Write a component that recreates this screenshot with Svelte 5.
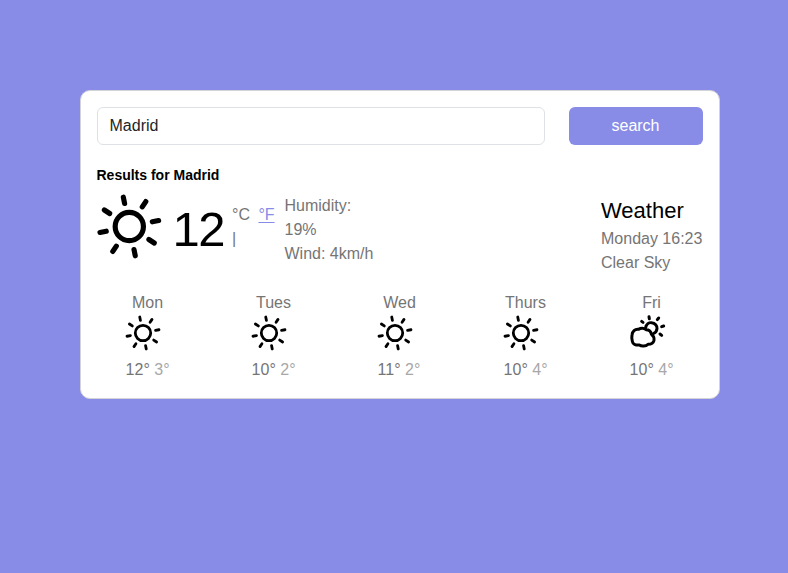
<script>
  const days = [
    { name: 'Mon', high: 12, low: 3, icon: 'sun' },
    { name: 'Tues', high: 10, low: 2, icon: 'sun' },
    { name: 'Wed', high: 11, low: 2, icon: 'sun' },
    { name: 'Thurs', high: 10, low: 4, icon: 'sun' },
    { name: 'Fri', high: 10, low: 4, icon: 'cloud' }
  ];
  const rays = [0, 45, 90, 135, 180, 225, 270, 315];
  let city = $state('Madrid');
</script>

{#snippet sun(size)}
  <svg width={size} height={size} viewBox="-32 -32 64 64" fill="none" stroke="#000" stroke-width="5" stroke-linecap="round">
    <circle r="13.7" />
    {#each rays as angle}
      <path d="M0 -22.8V-29" transform="rotate({angle - 11.5})" />
    {/each}
  </svg>
{/snippet}

{#snippet cloudSun()}
  <svg width="36" height="36" viewBox="0 0 108 108" fill="none" stroke="#000" stroke-width="9" stroke-linecap="round" stroke-linejoin="round">
    <path d="M50 38C52 28 60 22 68 23C78 24 85 32 84 41C83 50 79 54 73 56" />
    <path d="M60 5L61 11M89 9L85 14M104 33L98 35M93 57L98 61M38 19L42 22" />
    <path d="M9 60C10 49 18 42 28 43C35 39 45 39 51 44C60 44 66 50 67 57C73 62 76 69 75 76C73 84 66 88 57 88C50 94 38 95 31 90C20 91 11 87 10 79C8 73 8 66 9 60Z" />
  </svg>
{/snippet}

<main>
  <section class="card">
    <form onsubmit={(e) => e.preventDefault()}>
      <input type="text" bind:value={city} aria-label="City" />
      <button type="submit">search</button>
    </form>
    <h1>Results for Madrid</h1>
    <div class="current">
      <div class="icon">{@render sun(66)}</div>
      <strong class="temp">12</strong>
      <div class="units">°C <a href="#fahrenheit">°F</a><br />|</div>
      <div class="details">Humidity:<br />19%<br />Wind: 4km/h</div>
      <div class="summary">
        <h2>Weather</h2>
        <div>Monday 16:23</div>
        <div>Clear Sky</div>
      </div>
    </div>
    <div class="forecast">
      {#each days as day}
        <div class="day">
          <div class="name">{day.name}</div>
          <div class="small-icon">
            {#if day.icon === 'sun'}{@render sun(36)}{:else}{@render cloudSun()}{/if}
          </div>
          <div class="range">{day.high}° <span>{day.low}°</span></div>
        </div>
      {/each}
    </div>
  </section>
</main>

<style>
  :global(body) {
    background: #888ce6;
  }
  main {
    padding: 90px 68px 0 80px;
    font: 16px/24px "Liberation Sans", Arial, sans-serif;
    color: #757575;
  }
  .card {
    box-sizing: border-box;
    width: 640px;
    height: 309px;
    padding: 16px;
    background: #fff;
    border: 1px solid #d3d3d8;
    border-radius: 10px;
  }
  form {
    display: flex;
    gap: 24px;
  }
  input {
    box-sizing: border-box;
    width: 448px;
    height: 38px;
    padding: 0 11.5px;
    border: 1px solid #dee2e6;
    border-radius: 6px;
    font: inherit;
    color: #212529;
    outline: none;
  }
  button {
    width: 134px;
    height: 38px;
    padding: 0 1px 0 0;
    border: 0;
    border-radius: 6px;
    background: #888ce6;
    color: #fff;
    font: inherit;
  }
  h1 {
    margin: 21px 0 0 -0.5px;
    font-size: 14px;
    line-height: 18px;
    color: #000;
  }
  .current {
    display: flex;
    align-items: flex-start;
    height: 107px;
  }
  .icon {
    width: 66px;
    height: 66px;
    margin: 9px 0 0 -0.7px;
  }
  .icon svg {
    transform: translate(0.3px, 0.5px);
  }
  svg {
    display: block;
    overflow: visible;
  }
  .temp {
    width: 59.5px;
    margin: 15px 0 0 10.2px;
    font-size: 49px;
    line-height: 60px;
    font-weight: 400;
    letter-spacing: -1.5px;
    color: #000;
  }
  .units {
    width: 52.5px;
    margin-top: 19px;
    white-space: pre;
  }
  a {
    margin-left: 4px;
    color: #888ce6;
    text-decoration-thickness: 1px;
    text-underline-offset: 2px;
  }
  .details {
    margin-top: 10px;
  }
  .summary {
    width: 102px;
    margin: 12px 0 0 auto;
    white-space: nowrap;
  }
  h2 {
    margin: 0 0 1px;
    font-size: 22px;
    line-height: 30px;
    font-weight: 400;
    color: #000;
  }
  .forecast {
    display: flex;
  }
  .day {
    flex: 0 0 126px;
  }
  .name {
    width: 101px;
    text-align: center;
  }
  .small-icon {
    margin-left: 28px;
    height: 43px;
  }
  .range {
    margin-left: 28.6px;
  }
  .range span {
    color: #a8a8a8;
  }
</style>
